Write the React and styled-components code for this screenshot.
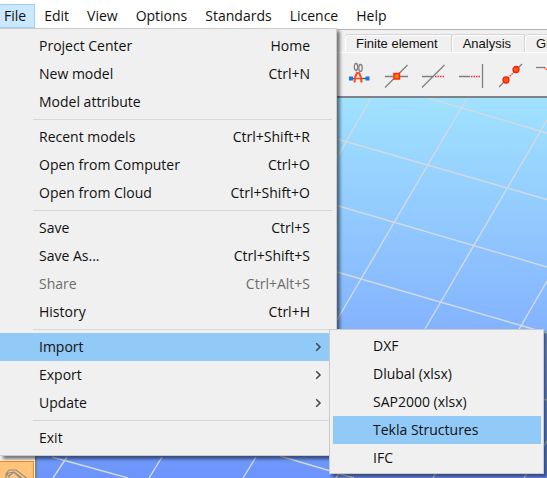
import React from "react";
import styled, { createGlobalStyle, css } from "styled-components";

const GlobalStyle = createGlobalStyle`
  * { box-sizing: border-box; }
  html, body { margin: 0; padding: 0; }
  body {
    font-family: "Open Sans", "Noto Sans", sans-serif;
    font-size: 14px;
    color: #111;
    overflow: hidden;
  }
  button { font: inherit; color: inherit; border: 0; margin: 0; background: none; }
`;

const Window = styled.div`
  display: flex;
  flex-direction: column;
  height: 100vh;
  background: #f0f0f0;
`;

const MenuBar = styled.nav`
  display: flex;
  flex: none;
  height: 30px;
  padding-top: 4px;
  background: #fff;
  border-bottom: 1px solid #b4b4b4;
`;

const MenuTitle = styled.div`
  position: relative;
  z-index: 2;
`;

const MenuButton = styled.button`
  height: 24px;
  padding: ${(p) => (p.$open ? "0 8px 0 4px" : "0 9px")};
  line-height: 22px;
  border: solid ${(p) => (p.$open ? "#99d1ff" : "transparent")};
  border-width: ${(p) => (p.$open ? "1px 1px 1px 0" : "1px 0")};
  background: ${(p) => (p.$open ? "#cce8ff" : "transparent")};
`;

const popup = css`
  position: absolute;
  background: #f0f0f0;
  border: 1px solid #ccc;
  box-shadow: 3px 3px 3px rgba(0, 0, 0, 0.5);
`;

const Menu = styled.div`
  ${popup}
  top: 24px;
  left: 0;
  width: 337px;
  padding: 3px 3px 3px 0;
  border-left: 0;
`;

const Submenu = styled.div`
  ${popup}
  top: -4px;
  left: 329px;
  width: 215px;
  padding: 2px 2px 1px 3px;
`;

const ItemWrap = styled.div`
  position: relative;
`;

const Item = styled.button`
  display: flex;
  align-items: center;
  justify-content: space-between;
  width: 100%;
  height: 28px;
  padding: 0 ${(p) => (p.$arrow ? 11 : 23)}px 0 ${(p) => (p.$sub ? 40 : 39)}px;
  line-height: 28px;
  text-align: left;
  background: ${(p) => (p.$active ? "#91c9f7" : "transparent")};
  &:disabled { color: #6d6d6d; }
`;

const Divider = styled.hr`
  height: 1px;
  margin: 3px 1px 3px 33px;
  border: 0;
  background: #d7d7d7;
`;

const TabRow = styled.div`
  display: flex;
  flex: none;
  height: 23px;
  padding-top: 4px;
  padding-left: 345px;
  overflow: hidden;
  font: 13px "Liberation Sans", Arial, sans-serif;
  border-bottom: 1px solid #fff;
`;

const Tab = styled.button`
  flex: none;
  padding: 0 13px 0 11px;
  border: solid #d4d4d4;
  border-width: 1px 1px 0 0;
  border-top-left-radius: 4px;
  box-shadow: inset 1px 1px 0 #fff;
  line-height: 18px;
`;

const Toolbar = styled.div`
  display: flex;
  flex: none;
  align-items: flex-start;
  gap: 14px;
  height: 45px;
  padding: 11px 0 0 346px;
  overflow: hidden;
  border-bottom: 2px solid #7d8387;
`;

const ToolButton = styled.button`
  flex: none;
  width: 24px;
  height: 24px;
  padding: 0;
  svg { display: block; overflow: visible; }
`;

const Workspace = styled.main`
  display: flex;
  flex: 1;
  min-height: 0;
`;

const SideBar = styled.aside`
  display: flex;
  flex-direction: column;
  flex: none;
  width: 37px;
  padding-top: 363px;
  overflow: hidden;
  border-right: 2px solid #7d8387;
`;

const SideButton = styled.button`
  flex: none;
  width: 34px;
  height: 34px;
  padding: 7px 3px;
  border: 1px solid #ff8c10;
  border-left: 0;
  background: #ffc37a;
`;

const Viewport = styled.div`
  flex: 1;
  min-width: 0;
  overflow: hidden;
  background: linear-gradient(#a0e2ff, #84b3fe 61%, #6c94fb);
  svg { display: block; width: 100%; height: 100%; }
`;

const Chevron = () => (
  <svg width="7" height="10" viewBox="0 0 7 10" aria-hidden="true">
    <path d="M1.2 1.2 5 5 1.2 8.8" fill="none" stroke="#444" strokeWidth="1.5" />
  </svg>
);

const Icon = ({ children }) => (
  <svg width="24" height="24" viewBox="0 0 24 24" fill="none" stroke="#808080" strokeWidth="1.3" aria-hidden="true">
    {children}
  </svg>
);

const dotted = { stroke: "#f03030", strokeDasharray: "1.5 1", strokeWidth: 1.3 };

const tools = [
  ["Cut member", (
    <>
      <path d="M5 14.5h16" stroke="#555" />
      <path d="M3 12.5h4v4H3zM19.5 12.5h4v4h-4z" fill="#1473f5" stroke="none" />
      <path d="M8.500 18.500q0-6 3-10.500M15.500 18.500q0-6-3-10.500" stroke="#ff4a1c" strokeWidth="2" />
      <path d="M10 14.500h4" stroke="#ff4a1c" />
      <ellipse cx="10" cy="3" rx="1.700" ry="3.500" />
      <ellipse cx="14.500" cy="4" rx="1.700" ry="3.500" />
    </>
  )],
  ["Intersect", (
    <>
      <path d="M1 12.5h23M1 23.500l22.500-22.500" />
      <path d="M10 9.500h5.500v5.500h-5.500z" fill="#ff7a00" stroke="#f52a16" strokeWidth="1.500" />
    </>
  )],
  ["Extend", (
    <>
      <path d="M0 12.500h12M0 23.500l22.500-22.500" />
      <path d="M13 12.500h10" {...dotted} />
    </>
  )],
  ["Extend to line", (
    <>
      <path d="M-1 12.500h11M22.500 0v24" />
      <path d="M11 12.500h10" {...dotted} />
    </>
  )],
  ["Join nodes", (
    <>
      <path d="M1 23l5-5M20 4l4-4" />
      <path d="m10 14 6-6" {...dotted} />
      <circle cx="8" cy="16" r="3" fill="#ff5a00" stroke="#f31f16" />
      <circle cx="18" cy="5.500" r="3" fill="#ff5a00" stroke="#f31f16" />
    </>
  )],
  ["Fillet", (
    <>
      <path d="M0 3.500h8" />
      <path d="M8 3.500q4 1 5 8" {...dotted} />
    </>
  )],
];

const titles = ["Edit", "View", "Options", "Standards", "Licence", "Help"];

const groups = [
  [["Project Center", "Home"], ["New model", "Ctrl+N"], ["Model attribute"]],
  [["Recent models", "Ctrl+Shift+R"], ["Open from Computer", "Ctrl+O"], ["Open from Cloud", "Ctrl+Shift+O"]],
  [["Save", "Ctrl+S"], ["Save As...", "Ctrl+Shift+S"], ["Share", "Ctrl+Alt+S"], ["History", "Ctrl+H"]],
  [["Import"], ["Export"], ["Update"]],
  [["Exit"]],
];

const formats = ["DXF", "Dlubal (xlsx)", "SAP2000 (xlsx)", "Tekla Structures", "IFC"];
const parents = ["Import", "Export", "Update"];

function FileMenu() {
  return (
    <Menu role="menu" aria-label="File">
      {groups.map((group, i) => (
        <React.Fragment key={i}>
          {i > 0 && <Divider />}
          {group.map(([label, keys]) => {
            const arrow = parents.includes(label);
            return (
              <ItemWrap key={label}>
                <Item role="menuitem" $arrow={arrow} $active={label === "Import"} disabled={label === "Share"}>
                  <span>{label}</span>
                  {keys && <span>{keys}</span>}
                  {arrow && <Chevron />}
                </Item>
                {label === "Import" && (
                  <Submenu role="menu" aria-label="Import">
                    {formats.map((f) => (
                      <Item key={f} role="menuitem" $sub $active={f === "Tekla Structures"}>{f}</Item>
                    ))}
                  </Submenu>
                )}
              </ItemWrap>
            );
          })}
        </React.Fragment>
      ))}
    </Menu>
  );
}

export default function App() {
  return (
    <>
      <GlobalStyle />
      <Window>
        <MenuBar>
          <MenuTitle>
            <MenuButton $open>File</MenuButton>
            <FileMenu />
          </MenuTitle>
          {titles.map((t) => <MenuButton key={t}>{t}</MenuButton>)}
        </MenuBar>
        <TabRow>
          <Tab>Finite element</Tab>
          <Tab>Analysis</Tab>
          <Tab>Gl</Tab>
        </TabRow>
        <Toolbar>
          {tools.map(([name, art]) => (
            <ToolButton key={name} aria-label={name}><Icon>{art}</Icon></ToolButton>
          ))}
        </Toolbar>
        <Workspace>
          <SideBar>
            <SideButton aria-label="Section">
              <svg width="24" height="20" viewBox="0 0 24 20" fill="none" stroke="#8f8f85" strokeWidth="1.2" aria-hidden="true">
                <path d="M1 5 4 1h7l12 9h-5L9 3M1 5v9l3 3M1 5l3-1 5-1-5 4v10M9 3l12 12M4 7 1 5" />
              </svg>
            </SideButton>
          </SideBar>
          <Viewport>
            <svg viewBox="37 98 510 380" preserveAspectRatio="xMinYMin slice" aria-hidden="true">
              <g stroke="#d2dae0" strokeWidth="1.4">
                <path d="M428 98 547 133M337 139 547 199.500M337 205.500 547 267M337 272 547 333M337 339 547 400M280 456 354 478M52 457 128 478" />
                <path d="M371 98 337 158M467 98 337 320M547 120 425 329M547 281 433 478M67 457 53 478M162 457 149 478M256 457 243 478M547 441 524 478M340 472 336 478" />
              </g>
            </svg>
          </Viewport>
        </Workspace>
      </Window>
    </>
  );
}
